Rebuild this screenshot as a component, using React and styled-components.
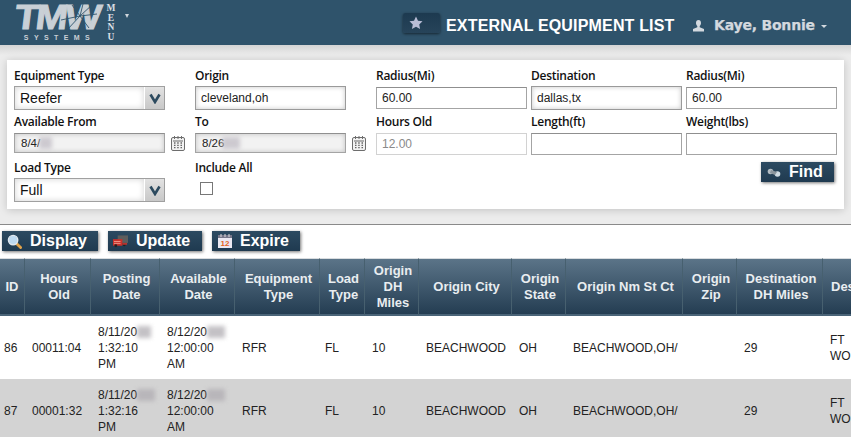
import React from 'react';
import styled, { createGlobalStyle } from 'styled-components';

const Global = createGlobalStyle`
  html, body { margin: 0; padding: 0; background: #fff; overflow: hidden; }
  body { width: 851px; height: 437px; font-family: "Liberation Sans", Arial, sans-serif; }
  * { box-sizing: border-box; }
`;

const Page = styled.div`
  width: 851px; height: 437px; overflow: hidden; display: flex; flex-direction: column;
`;

const Header = styled.header`
  height: 45px; flex: none; background: #2f536b; display: flex; align-items: flex-start;
`;
const Logo = styled.div`
  position: relative; width: 80px; height: 38px; margin: 4px 0 0 17px; color: #c9d0d6;
  display: flex; flex-direction: column; align-items: center;
`;
const LogoMark = styled.span`
  font: 700 35px/25px "Liberation Sans", Arial, sans-serif; letter-spacing: -2.5px;
  transform: skewX(-7deg) scaleX(1.1); -webkit-text-stroke: 1px #c9d0d6; white-space: nowrap;
`;
const LogoSub = styled.span`
  font: 700 7px/7px "Liberation Sans", Arial, sans-serif; letter-spacing: 5.4px; margin-top: 5px; margin-left: 5px; white-space: nowrap;
`;
const Burst = styled.svg`
  position: absolute; left: 42px; top: 0;
`;
const MenuWord = styled.div`
  margin: 4px 0 0 8px; width: 12px; display: flex; flex-direction: column; align-items: center;
  font: 700 9.5px/9.5px "Liberation Serif", serif; color: #d9dfe4;
`;
const Caret = styled.span`
  margin: 14px 0 0 8px; width: 0; height: 0; border-left: 2.5px solid transparent; border-right: 2.5px solid transparent;
  border-top: 4px solid #cfd6dc;
`;
const FavButton = styled.button`
  margin: 13px 0 0 274px; width: 37px; height: 20px; padding: 0 0 0 6px; border: 0; border-radius: 2px;
  background: linear-gradient(#1d3a50, #27445a); box-shadow: 0 1px 3px rgba(0,0,0,.55);
  display: flex; align-items: center;
`;
const Title = styled.h1`
  margin: 16px 0 0 6px; font: 700 16px/20px "Liberation Sans", Arial, sans-serif; color: #fff; white-space: nowrap;
  width: 230px; letter-spacing: .17px;
`;
const UserBox = styled.div`
  margin: 16px 0 0 17px; display: flex; align-items: center; color: #d3d9df;
  font: 700 14px/19px "DejaVu Sans", Verdana, sans-serif; white-space: nowrap; letter-spacing: -0.2px;
  -webkit-text-stroke: .25px #d3d9df;
`;
const UserName = styled.span` margin-left: 10px; `;
const UserCaret = styled.span`
  margin: 2px 0 0 6px; width: 0; height: 0; border-left: 3px solid transparent; border-right: 3px solid transparent;
  border-top: 3px solid #d3d9df;
`;

const FilterBand = styled.section`
  height: 180px; flex: none; padding: 15px 7px 15px;
  background: linear-gradient(#d4d4d4, #ececec 10px, #ececec);
  border-bottom: 1px solid #8a8a8a;
`;
const Panel = styled.div`
  height: 149px; background: #fff; box-shadow: 0 1px 8px rgba(0,0,0,.18); padding: 7px 0 0 7px;
  display: grid; grid-template-columns: 181px 181px 155px 155px 151px; grid-template-rows: 46px 46px 44px;
`;
const Field = styled.div` display: flex; flex-direction: column; align-items: flex-start; `;
const Label = styled.label`
  font: 600 12px/17px "Open Sans", sans-serif; color: #111; height: 19px; white-space: nowrap; letter-spacing: -0.27px;
`;
const Row = styled.div` display: flex; align-items: center; gap: 6px; margin-top: 1px; `;
const Input = styled.input`
  width: 151px; height: 22px; padding: 0 5px; margin: 1px 0 0; border: 1px solid #a4a4a4; border-top-color: #8f8f8f; border-radius: 0; outline: 0;
  font: 12px "Liberation Sans", Arial, sans-serif; color: #222; background: #fff;
  ${p => p.$shaded ? 'box-shadow: inset 0 0 5px rgba(0,0,0,.22); margin-top:0; height:24px; border-color:#9a9a9a;' : ''}
  &:disabled { border-color: #d2d2d2; color: #8a8a8a; background: #fff; }
`;
const DateWrap = styled.div` position: relative; width: 151px; height: 20px; `;
const DateInput = styled(Input)`
  height: 20px; font-size: 11.5px; padding: 0 6px; background: #f2f2f2; margin: 0; box-shadow: inset 0 0 5px rgba(0,0,0,.2);
`;
const DateBlur = styled.span`
  position: absolute; left: ${p => p.$x}px; top: 4px; width: ${p => p.$w}px; height: 12px; background: #c4c0c8; filter: blur(2px); opacity: .8;
`;
const Select = styled.div`
  width: 151px; height: 24px; border: 1px solid #a0a0a0; display: flex; background: #fff; color: #111;
`;
const SelectText = styled.div`
  flex: 1; font: 14px/23px "Liberation Sans", Arial, sans-serif; padding-left: 5px; box-shadow: inset 0 0 6px rgba(0,0,0,.18);
  border-right: 1px solid #fff;
`;
const SelectArrow = styled.div`
  width: 19px; background: linear-gradient(#e2e2e2, #c8c8c8); display: flex; align-items: center; justify-content: center;
`;
const Check = styled.div`
  width: 13px; height: 13px; margin: 4px 0 0 5px; border: 1px solid #777; background: #fff;
`;
const FindSlot = styled.div` display: flex; justify-content: flex-end; padding: 3px 3px 0 0; align-self: start; `;

const Toolbar = styled.div`
  height: 33px; flex: none; display: flex; gap: 10px; padding: 6px 0 0 2px;
`;
const ActionButton = styled.button`
  height: 20px; width: ${p => p.$w}px; border: 0; padding: 0 0 0 ${p => p.$pad ?? 5}px; display: flex; align-items: center; gap: ${p => p.$gap ?? 8}px;
  background: linear-gradient(#2c4a61, #1f3a50); color: #fff; box-shadow: 1px 1px 3px rgba(0,0,0,.55);
  font: 700 16px/20px "Liberation Sans", Arial, sans-serif; white-space: nowrap;
`;

const Table = styled.table`
  border-collapse: separate; border-spacing: 0; table-layout: fixed; width: 1015px; font: 12px/16px "Liberation Sans", Arial, sans-serif; color: #222;
`;
const HeadRow = styled.tr` height: 58px; `;
const Th = styled.th`
  padding: 0 0 0 3px; font: 700 13px/16px "Liberation Sans", Arial, sans-serif; color: #e9edf0; text-align: center;
  border-right: 1px solid #47606f; border-top: 1px solid #d8dcdf; border-bottom: 2px solid #4a6478;
  background: linear-gradient(#5b7488, #243d52); overflow: hidden;
  &:first-child { padding: 0; }
  &:last-child { text-align: left; padding-left: 8px; }
`;
const Tr = styled.tr`
  height: ${p => p.$h}px; background: ${p => p.$alt ? '#d3d3d3' : '#fff'};
`;
const Td = styled.td`
  padding: 0 0 0 ${p => p.$pl ?? 6}px; vertical-align: middle; overflow: hidden; white-space: nowrap; line-height: 16px;
`;
const Blur = styled.span`
  display: inline-block; width: ${p => p.$w}px; height: 12px; background: #b0adb2; filter: blur(2.2px); opacity: .75; vertical-align: middle;
`;
const Lines = styled.span` display: block; white-space: nowrap; `;

const StarIcon = () => (
  <svg width="14" height="14" viewBox="0 0 24 24"><path d="M12 1l3.400 7.200 7.800 1-5.700 5.400 1.500 7.800L12 18.600 5 22.400l1.500-7.800L.8 9.200l7.800-1z" fill="#b9bdd6" /></svg>
);
const UserIcon = () => (
  <svg width="11" height="12" viewBox="0 0 11 12"><path d="M5.500 0C7.200 0 8 1.300 8 3c0 1.300-.6 2.500-1.300 3v1.200L11 9v2.500H0V9l4.300-1.800V6C3.600 5.500 3 4.300 3 3c0-1.700.8-3 2.500-3z" fill="#d3d9df" /></svg>
);
const Chevron = () => (
  <svg width="12" height="11" viewBox="0 0 12 11"><path d="M1.500 1.500L6 9l4.500-7.500" fill="none" stroke="#2c4a5f" strokeWidth="2.600" /></svg>
);
const CalendarIcon = () => (
  <svg width="14" height="15" viewBox="0 0 14 15">
    <rect x=".5" y="1.500" width="13" height="13" rx="1.500" fill="#f2f2f2" stroke="#6d6d6d" />
    <path d="M3.500 0v3M7 0v3M10.500 0v3" stroke="#6d6d6d" />
    <path d="M2 5h10" stroke="#6d6d6d" />
    <path d="M3 7h1.500M6.200 7h1.500M9.500 7H11M3 9.300h1.500M6.200 9.300h1.500M9.500 9.300H11M3 11.600h1.500M6.200 11.600h1.500M9.500 11.600H11" stroke="#666" strokeWidth="1.300" />
  </svg>
);
const SearchIcon = () => (
  <svg width="15" height="15" viewBox="0 0 16 16">
    <path d="M9.500 9.500l5 5" stroke="#e0a24a" strokeWidth="3" strokeLinecap="round" />
    <circle cx="6.500" cy="6.500" r="5" fill="#bcd9f0" stroke="#dfe7ee" strokeWidth="1.500" />
  </svg>
);
const TruckIcon = () => (
  <svg width="15" height="13" viewBox="0 0 16 13">
    <rect x="5" y="0" width="11" height="8" fill="#5d5d5d" />
    <rect x="0" y="4" width="10" height="7" fill="#c9302a" />
    <path d="M1 6.500h7M1 8.500h7" stroke="#f3b0a0" strokeWidth=".8" />
    <circle cx="3" cy="11" r="1.500" fill="#222" /><circle cx="12" cy="10" r="1.500" fill="#222" />
    <rect x="10" y="8" width="5" height="2" fill="#b8322c" />
  </svg>
);
const ExpireIcon = () => (
  <svg width="14" height="14" viewBox="0 0 14 14">
    <rect x="0" y="1" width="14" height="13" fill="#ece9f2" />
    <rect x="0" y="1" width="14" height="3" fill="#77778a" />
    <path d="M3 0v3M7 0v3M11 0v3" stroke="#ddd" />
    <text x="7" y="12" textAnchor="middle" fontFamily="Liberation Sans" fontWeight="700" fontSize="8" fill="#e5641d">12</text>
  </svg>
);
const BinocularsIcon = () => (
  <svg width="14" height="9" viewBox="0 0 14 9">
    <circle cx="3.500" cy="3.500" r="2.800" fill="#b3bcc3" /><circle cx="10.500" cy="6" r="2.800" fill="#cfdbe3" />
    <path d="M4 2l6 2-2 3-5-2z" fill="#8b959d" />
  </svg>
);

const TmwLogo = () => (
  <Logo>
    <LogoMark>TMW</LogoMark>
    <Burst width="38" height="26" viewBox="0 0 38 26">
      <path d="M21 12L8 26M21 12L34 0M21 12L13 1M21 12L30 24M21 12L38 10M21 12L2 16M21 12L24 0" stroke="#2f536b" strokeWidth=".9" />
    </Burst>
    <LogoSub>SYSTEMS</LogoSub>
  </Logo>
);

const columns = [
  [25, 'ID'], [66, 'Hours Old'], [69, 'Posting Date'], [75, 'Available Date'], [85, 'Equipment Type'],
  [45, 'Load Type'], [54, 'Origin DH Miles'], [93, 'Origin City'], [54, 'Origin State'], [117, 'Origin Nm St Ct'],
  [54, 'Origin Zip'], [86, 'Destination DH Miles'], [192, 'Destination Nm St Ct'],
];

const rows = [
  { id: '86', old: '00011:04', time: '1:32:10', blurA: 14, blurB: 18, h: 63 },
  { id: '87', old: '00001:32', time: '1:32:16', blurA: 18, blurB: 18, h: 63, alt: true },
];

export default function App() {
  return (
    <Page>
      <Global />
      <Header>
        <TmwLogo />
        <MenuWord><span>M</span><span>E</span><span>N</span><span>U</span></MenuWord>
        <Caret />
        <FavButton aria-label="Favorites"><StarIcon /></FavButton>
        <Title>EXTERNAL EQUIPMENT LIST</Title>
        <UserBox><UserIcon /><UserName>Kaye, Bonnie</UserName><UserCaret /></UserBox>
      </Header>
      <FilterBand>
        <Panel>
          <Field>
            <Label>Equipment Type</Label>
            <Select><SelectText>Reefer</SelectText><SelectArrow><Chevron /></SelectArrow></Select>
          </Field>
          <Field><Label>Origin</Label><Input $shaded defaultValue="cleveland,oh" /></Field>
          <Field><Label>Radius(Mi)</Label><Input defaultValue="60.00" /></Field>
          <Field><Label>Destination</Label><Input $shaded defaultValue="dallas,tx" /></Field>
          <Field><Label>Radius(Mi)</Label><Input defaultValue="60.00" /></Field>

          <Field>
            <Label>Available From</Label>
            <Row><DateWrap><DateInput defaultValue="8/4/" /><DateBlur $x={25} $w={13} /></DateWrap><CalendarIcon /></Row>
          </Field>
          <Field>
            <Label>To</Label>
            <Row><DateWrap><DateInput defaultValue="8/26" /><DateBlur $x={27} $w={18} /></DateWrap><CalendarIcon /></Row>
          </Field>
          <Field><Label>Hours Old</Label><Input disabled defaultValue="12.00" /></Field>
          <Field><Label>Length(ft)</Label><Input /></Field>
          <Field><Label>Weight(lbs)</Label><Input /></Field>

          <Field>
            <Label>Load Type</Label>
            <Select><SelectText>Full</SelectText><SelectArrow><Chevron /></SelectArrow></Select>
          </Field>
          <Field><Label>Include All</Label><Check /></Field>
          <div />
          <div />
          <FindSlot>
            <ActionButton $w={73} $pad={6} $gap={8}><BinocularsIcon />Find</ActionButton>
          </FindSlot>
        </Panel>
      </FilterBand>
      <Toolbar>
        <ActionButton $w={96} $pad={5} $gap={8}><SearchIcon />Display</ActionButton>
        <ActionButton $w={94} $pad={5} $gap={8}><TruckIcon />Update</ActionButton>
        <ActionButton $w={88} $pad={6} $gap={8}><ExpireIcon />Expire</ActionButton>
      </Toolbar>
      <Table>
        <colgroup>{columns.map(([w], i) => <col key={i} style={{ width: w }} />)}</colgroup>
        <thead>
          <HeadRow>{columns.map(([, t]) => <Th key={t}>{t}</Th>)}</HeadRow>
        </thead>
        <tbody>
          {rows.map(r => (
            <Tr key={r.id} $h={r.h} $alt={r.alt}>
              <Td $pl={4}>{r.id}</Td>
              <Td $pl={7}>{r.old}</Td>
              <Td $pl={7}>
                <Lines>8/11/20<Blur $w={r.blurA} /></Lines>
                <Lines>{r.time}</Lines>
                <Lines>PM</Lines>
              </Td>
              <Td $pl={7}>
                <Lines>8/12/20<Blur $w={r.blurB} /></Lines>
                <Lines>12:00:00</Lines>
                <Lines>AM</Lines>
              </Td>
              <Td $pl={7}>RFR</Td>
              <Td $pl={5}>FL</Td>
              <Td $pl={7}>10</Td>
              <Td $pl={7}>BEACHWOOD</Td>
              <Td $pl={7}>OH</Td>
              <Td $pl={7}>BEACHWOOD,OH/</Td>
              <Td />
              <Td $pl={7}>29</Td>
              <Td $pl={7}>FT<br />WORTH</Td>
            </Tr>
          ))}
        </tbody>
      </Table>
    </Page>
  );
}
